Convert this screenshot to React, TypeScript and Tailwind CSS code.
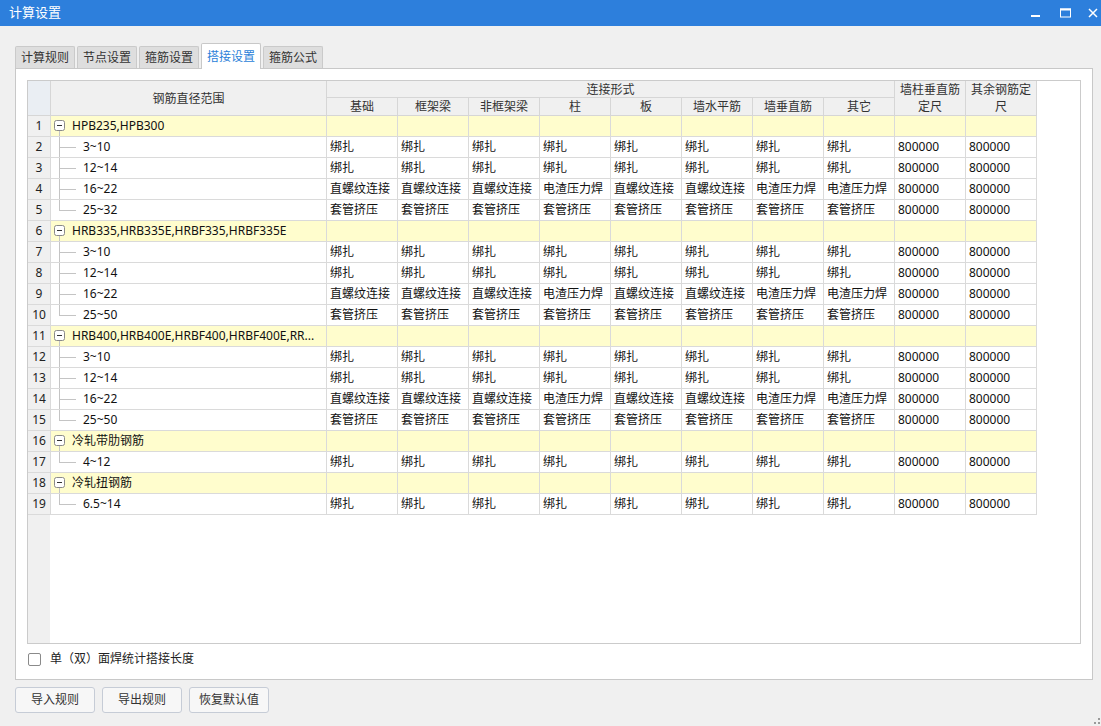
import React from "react";

type Row = { num: number; group?: boolean; label: string; last?: boolean; vals?: string[] };

const B8 = Array(8).fill("绑扎");
const S8 = ["直螺纹连接", "直螺纹连接", "直螺纹连接", "电渣压力焊", "直螺纹连接", "直螺纹连接", "电渣压力焊", "电渣压力焊"];
const T8 = Array(8).fill("套管挤压");

const rows: Row[] = [
  { num: 1, group: true, label: "HPB235,HPB300" },
  { num: 2, label: "3~10", vals: B8 },
  { num: 3, label: "12~14", vals: B8 },
  { num: 4, label: "16~22", vals: S8 },
  { num: 5, label: "25~32", vals: T8, last: true },
  { num: 6, group: true, label: "HRB335,HRB335E,HRBF335,HRBF335E" },
  { num: 7, label: "3~10", vals: B8 },
  { num: 8, label: "12~14", vals: B8 },
  { num: 9, label: "16~22", vals: S8 },
  { num: 10, label: "25~50", vals: T8, last: true },
  { num: 11, group: true, label: "HRB400,HRB400E,HRBF400,HRBF400E,RR..." },
  { num: 12, label: "3~10", vals: B8 },
  { num: 13, label: "12~14", vals: B8 },
  { num: 14, label: "16~22", vals: S8 },
  { num: 15, label: "25~50", vals: T8, last: true },
  { num: 16, group: true, label: "冷轧带肋钢筋" },
  { num: 17, label: "4~12", vals: B8, last: true },
  { num: 18, group: true, label: "冷轧扭钢筋" },
  { num: 19, label: "6.5~14", vals: B8, last: true },
];

const subHeads = ["基础", "框架梁", "非框架梁", "柱", "板", "墙水平筋", "墙垂直筋", "其它"];

const hdr = "bg-[#f0f0f0] border-r border-b border-[#d6d6d6] text-[#333] flex items-center justify-center text-center leading-[17px]";
const cell = "border-r border-b border-[#dadada] flex items-center pl-[3px] whitespace-nowrap overflow-hidden";

function Tabs() {
  const tabs = ["计算规则", "节点设置", "箍筋设置", "搭接设置", "箍筋公式"];
  return (
    <div className="flex items-end gap-[2px] h-[25px]">
      {tabs.map((t) =>
        t === "搭接设置" ? (
          <div
            key={t}
            className="relative z-10 -mb-px h-[26px] w-[60px] bg-white border border-b-0 border-[#c8c8c8] rounded-t-[2px] flex items-center justify-center text-[#2b7fd9]"
          >
            {t}
          </div>
        ) : (
          <div
            key={t}
            className="h-[22px] w-[60px] bg-[#dedede] border border-b-0 border-[#cacaca] rounded-t-[2px] flex items-center justify-center text-[#333]"
          >
            {t}
          </div>
        )
      )}
    </div>
  );
}

function GroupBox() {
  return (
    <svg width="12" height="20" className="shrink-0 ml-[3px]">
      <rect x="0.5" y="4.5" width="10" height="10" rx="2" fill="#fff" stroke="#8a8a8a" />
      <line x1="3" y1="9.5" x2="8" y2="9.5" stroke="#333" />
      <line x1="5.5" y1="15" x2="5.5" y2="20" stroke="#c4c4c4" />
    </svg>
  );
}

function Connector({ last }: { last?: boolean }) {
  return (
    <svg width="24" height="20" className="shrink-0 ml-[8px]">
      <line x1="0.5" y1="0" x2="0.5" y2={last ? 10.5 : 20} stroke="#c4c4c4" />
      <line x1="0" y1="10.5" x2="17" y2="10.5" stroke="#c4c4c4" />
    </svg>
  );
}

function Grid() {
  return (
    <div className="w-[1054px] h-[564px] border border-[#cbcbcb] bg-white flex flex-col">
      <div className="grid grid-cols-[23px_276px_repeat(10,71px)] grid-rows-[17px_18px] auto-rows-[21px] w-[1009px]">
        <div className="row-span-2 bg-[#eaeef3] border-r border-b border-[#d6d6d6]" />
        <div className={`row-span-2 ${hdr}`}>钢筋直径范围</div>
        <div className={`col-span-8 ${hdr}`}>连接形式</div>
        <div className={`row-span-2 ${hdr}`}>
          墙柱垂直筋
          <br />
          定尺
        </div>
        <div className={`row-span-2 ${hdr}`}>
          其余钢筋定
          <br />尺
        </div>
        {subHeads.map((h) => (
          <div key={h} className={hdr}>
            {h}
          </div>
        ))}
        {rows.map((r) => (
          <React.Fragment key={r.num}>
            <div className="bg-[#f0f0f0] border-r border-b border-[#dadada] flex items-center justify-center text-[#222]">
              {r.num}
            </div>
            {r.group ? (
              <>
                <div className="bg-[#fffdcd] border-r border-b border-[#dadada] flex items-stretch overflow-hidden">
                  <GroupBox />
                  <span className="ml-[6px] flex items-center whitespace-nowrap text-[#111]">{r.label}</span>
                </div>
                {Array.from({ length: 10 }).map((_, i) => (
                  <div key={i} className="bg-[#fffdcd] border-r border-b border-[#dadada]" />
                ))}
              </>
            ) : (
              <>
                <div className="bg-white border-r border-b border-[#dadada] flex items-stretch">
                  <Connector last={r.last} />
                  <span className="flex items-center text-[#111]">{r.label}</span>
                </div>
                {r.vals!.map((v, i) => (
                  <div key={i} className={`${cell} text-[#111]`}>
                    {v}
                  </div>
                ))}
                <div className={`${cell} text-[#111]`}>800000</div>
                <div className={`${cell} text-[#111]`}>800000</div>
              </>
            )}
          </React.Fragment>
        ))}
      </div>
      <div className="flex-1 flex">
        <div className="w-[22px] bg-[#f0f0f0]" />
      </div>
    </div>
  );
}

export default function App() {
  return (
    <div className="w-[1101px] h-[726px] bg-[#f0f0f0] flex flex-col text-[12px] font-['Noto_Sans','Noto_Sans_CJK_SC',sans-serif] overflow-hidden relative">
      <div className="h-[26px] bg-[#2d7fdc] flex items-center pl-[9px] text-white text-[12px] shrink-0">
        <span className="text-[13px]">计算设置</span>
        <div className="ml-auto flex items-center">
          <svg width="9" height="10" className="block">
            <rect x="0" y="7" width="9" height="2" fill="#fff" />
          </svg>
          <svg width="11" height="10" className="block ml-[20px]">
            <rect x="0.5" y="1" width="10" height="8" fill="none" stroke="#fff" />
            <rect x="0" y="0.5" width="11" height="2" fill="#fff" />
          </svg>
          <svg width="10" height="10" className="block ml-[17px] mr-[3px]">
            <path d="M1 1 L9 9 M9 1 L1 9" stroke="#fff" strokeWidth="1.5" />
          </svg>
        </div>
      </div>
      <div className="pl-[15px] pt-[17px] flex flex-col">
        <Tabs />
        <div className="w-[1078px] h-[612px] bg-white border border-[#c8c8c8] pt-[11px] pl-[11px] flex flex-col">
          <Grid />
          <div className="flex items-center mt-[8px] ml-[1px] h-[14px]">
            <div className="w-[13px] h-[13px] border border-[#8a8a8a] rounded-[2px] bg-white" />
            <span className="ml-[9px] text-[#222]">单（双）面焊统计搭接长度</span>
          </div>
        </div>
        <div className="flex gap-[7px] mt-[7px]">
          {["导入规则", "导出规则", "恢复默认值"].map((b) => (
            <div
              key={b}
              className="w-[80px] h-[26px] border border-[#c6ccd6] rounded-[3px] bg-[#f7f7f7] flex items-center justify-center text-[#333]"
            >
              {b}
            </div>
          ))}
        </div>
      </div>
      <svg width="6" height="6" className="absolute right-[1px] bottom-[2px]">
        <rect x="4" y="0" width="2" height="2" fill="#9a9a9a" />
        <rect x="0" y="4" width="2" height="2" fill="#9a9a9a" />
        <rect x="4" y="4" width="2" height="2" fill="#9a9a9a" />
      </svg>
    </div>
  );
}
